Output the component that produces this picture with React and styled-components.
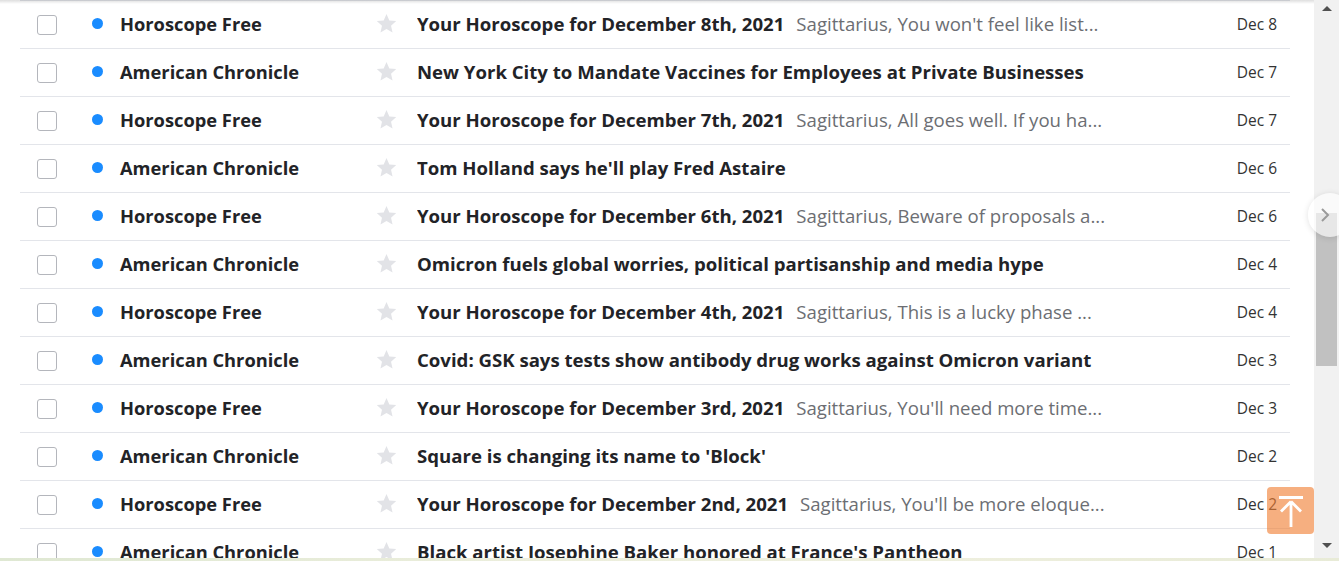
import React from "react";
import styled, { createGlobalStyle } from "styled-components";

const Global = createGlobalStyle`
  html, body { margin: 0; padding: 0; background: #fff; overflow: hidden; }
  body { font-family: "Open Sans", "Noto Sans", sans-serif; }
  * { box-sizing: border-box; }
`;

const Page = styled.div`
  width: 1339px;
  height: 561px;
  display: flex;
  flex-direction: column;
  position: relative;
  overflow: hidden;
`;

const Body = styled.div`
  flex: 1;
  display: flex;
  min-height: 0;
`;

const Main = styled.main`
  flex: 1;
  min-width: 0;
  padding: 0 24px 0 20px;
  overflow: hidden;
  position: relative;
`;

const TopShadow = styled.div`
  position: absolute;
  left: 0;
  right: 0;
  top: 0;
  height: 4px;
  background: linear-gradient(to bottom, rgba(0, 0, 0, 0.13), rgba(0, 0, 0, 0));
  pointer-events: none;
`;

const List = styled.ul`
  list-style: none;
  margin: 0;
  padding: 0;
`;

const Row = styled.li`
  height: 48px;
  display: flex;
  align-items: center;
  border-top: 1px solid #e3e5ea;
  padding: 0 13px 2px 17px;
`;

const Check = styled.span`
  width: 20px;
  height: 20px;
  border: 1.5px solid #b4b6bc;
  border-radius: 3px;
  flex: none;
  margin-top: 2px;
`;

const Dot = styled.span`
  width: 11px;
  height: 11px;
  border-radius: 50%;
  background: #1a8cff;
  margin-left: 35px;
  flex: none;
`;

const Sender = styled.span`
  width: 257px;
  flex: none;
  margin-left: 17px;
  font-size: 18.3px;
  font-weight: 700;
  color: #222327;
  white-space: nowrap;
`;

const Star = styled.svg`
  width: 23px;
  height: 23px;
  flex: none;
  margin-left: -2px;
`;

const Content = styled.span`
  flex: 1;
  min-width: 0;
  margin-left: 19px;
  max-width: 690px;
  display: flex;
  align-items: baseline;
  white-space: nowrap;
  overflow: hidden;
`;

const Subject = styled.span`
  font-size: 18.6px;
  font-weight: 700;
  color: #222327;
  flex: none;
`;

const Preview = styled.span`
  font-size: 18.6px;
  font-weight: 400;
  color: #6c6e73;
  margin-left: 12px;
  overflow: hidden;
`;

const DateCell = styled.span`
  margin-left: auto;
  font-size: 15.5px;
  color: #333;
  white-space: nowrap;
`;

const Scrollbar = styled.div`
  width: 25px;
  flex: none;
  background: #f1f1f1;
  display: flex;
  flex-direction: column;
  align-items: center;
  padding-top: 6px;
`;

const Arrow = styled.span`
  width: 0;
  height: 0;
  border-left: 5px solid transparent;
  border-right: 5px solid transparent;
  ${(p) => (p.$down ? "border-top: 5px solid #505050;" : "border-bottom: 5px solid #505050;")}
  margin: ${(p) => (p.$down ? "auto 0 10px" : "0")};
`;

const Thumb = styled.div`
  width: 21px;
  height: 153px;
  background: #c1c1c1;
  margin-top: 202px;
`;

const BottomStrip = styled.div`
  height: 3px;
  flex: none;
  background: linear-gradient(to right, #dfe8d3, #eceedc 40%, #eeefde 70%, #e8ebd7);
`;

const SideToggle = styled.button`
  position: absolute;
  left: 1308px;
  top: 193px;
  width: 44px;
  height: 44px;
  border-radius: 50%;
  border: none;
  padding: 0 0 0 12px;
  background: rgba(255, 255, 255, 0.62);
  box-shadow: 0 1px 6px rgba(0, 0, 0, 0.12);
  display: flex;
  align-items: center;
  justify-content: flex-start;
`;

const BackToTop = styled.button`
  position: absolute;
  left: 1267px;
  top: 487px;
  width: 47px;
  height: 47px;
  border: none;
  border-radius: 4px;
  background: rgba(240, 126, 50, 0.62);
  display: flex;
  align-items: center;
  justify-content: center;
  padding: 0;
`;

const rows = [
  ["Horoscope Free", "Your Horoscope for December 8th, 2021", "Sagittarius, You won't feel like list...", "Dec 8"],
  ["American Chronicle", "New York City to Mandate Vaccines for Employees at Private Businesses", "", "Dec 7"],
  ["Horoscope Free", "Your Horoscope for December 7th, 2021", "Sagittarius, All goes well. If you ha...", "Dec 7"],
  ["American Chronicle", "Tom Holland says he'll play Fred Astaire", "", "Dec 6"],
  ["Horoscope Free", "Your Horoscope for December 6th, 2021", "Sagittarius, Beware of proposals a...", "Dec 6"],
  ["American Chronicle", "Omicron fuels global worries, political partisanship and media hype", "", "Dec 4"],
  ["Horoscope Free", "Your Horoscope for December 4th, 2021", "Sagittarius, This is a lucky phase ...", "Dec 4"],
  ["American Chronicle", "Covid: GSK says tests show antibody drug works against Omicron variant", "", "Dec 3"],
  ["Horoscope Free", "Your Horoscope for December 3rd, 2021", "Sagittarius, You'll need more time...", "Dec 3"],
  ["American Chronicle", "Square is changing its name to 'Block'", "", "Dec 2"],
  ["Horoscope Free", "Your Horoscope for December 2nd, 2021", "Sagittarius, You'll be more eloque...", "Dec 2"],
  ["American Chronicle", "Black artist Josephine Baker honored at France's Pantheon", "", "Dec 1"],
];

export default function App() {
  return (
    <Page>
      <Global />
      <Body>
        <Main>
          <List>
            {rows.map(([sender, subject, preview, date], i) => (
              <Row key={i}>
                <Check />
                <Dot />
                <Sender>{sender}</Sender>
                <Star viewBox="0 0 24 24">
                  <path
                    d="M12 2.2l2.95 6.6 7.2.7-5.42 4.8 1.58 7.05L12 17.7l-6.3 3.65 1.58-7.05L1.85 9.5l7.2-.7z"
                    fill="#e2e3e7"
                  />
                </Star>
                <Content>
                  <Subject>{subject}</Subject>
                  {preview && <Preview>{preview}</Preview>}
                </Content>
                <DateCell>{date}</DateCell>
              </Row>
            ))}
          </List>
          <TopShadow />
        </Main>
        <Scrollbar>
          <Arrow />
          <Thumb />
          <Arrow $down />
        </Scrollbar>
      </Body>
      <BottomStrip />
      <SideToggle aria-label="expand">
        <svg width="10" height="16" viewBox="0 0 10 16">
          <path d="M2 2l6 6-6 6" fill="none" stroke="#9a9a9a" strokeWidth="2" />
        </svg>
      </SideToggle>
      <BackToTop aria-label="back to top">
        <svg width="28" height="32" viewBox="0 0 28 32">
          <path d="M2 2.5h24M14 7v30M14 6.5L4 16.5M14 6.5l10 10" fill="none" stroke="#fff" strokeWidth="2.8" />
        </svg>
      </BackToTop>
    </Page>
  );
}
